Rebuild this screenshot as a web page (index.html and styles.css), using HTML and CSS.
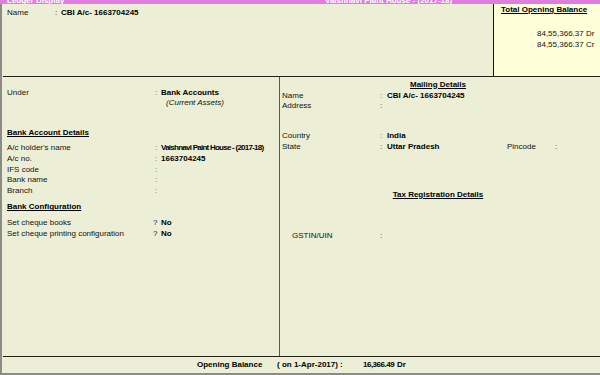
FILE: index.html
```html
<!DOCTYPE html>
<html lang="en">
<head>
  <meta charset="UTF-8" />
  <title>Ledger Display</title>
  <link rel="stylesheet" href="styles.css">
</head>
<body>

  <div class="titlebar">
    <span class="title-left">Ledger Display</span>
    <span class="title-company">Vaishnavi Paint House - (2017-18)</span>
  </div>

  <div class="frame">
    <div class="top">
      <div class="top-main">
        <div class="row">
          <span class="top-label">Name</span>
          <span class="top-sep">:</span>
          <span class="val">CBI A/c- 1663704245</span>
        </div>
      </div>
      <div class="balance-box">
        <div class="heading">Total Opening Balance</div>
        <div class="totals">
          <div>84,55,366.37 Dr</div>
          <div>84,55,366.37 Cr</div>
        </div>
      </div>
    </div>

    <div class="panes">
      <div class="pane left">
        <div class="row first">
          <span class="label">Under</span>
          <span class="sep">:</span>
          <span class="val">Bank Accounts</span>
        </div>
        <div class="row">
          <span class="label"></span>
          <span class="sep"></span>
          <span class="group">(Current Assets)</span>
        </div>

        <div class="heading section-1">Bank Account Details</div>
        <div class="rows-1">
          <div class="row">
            <span class="label">A/c holder's name</span>
            <span class="sep">:</span>
            <span class="val narrow">Vaishnavi Paint House - (2017-18)</span>
          </div>
          <div class="row">
            <span class="label">A/c no.</span>
            <span class="sep">:</span>
            <span class="val">1663704245</span>
          </div>
          <div class="row">
            <span class="label">IFS code</span>
            <span class="sep">:</span>
          </div>
          <div class="row">
            <span class="label">Bank name</span>
            <span class="sep">:</span>
          </div>
          <div class="row">
            <span class="label">Branch</span>
            <span class="sep">:</span>
          </div>
        </div>

        <div class="heading section-2">Bank Configuration</div>
        <div class="rows-2">
          <div class="row">
            <span class="label">Set cheque books</span>
            <span class="ask">?</span>
            <span class="val">No</span>
          </div>
          <div class="row">
            <span class="label">Set cheque printing configuration</span>
            <span class="ask">?</span>
            <span class="val">No</span>
          </div>
        </div>
      </div>

      <div class="pane right">
        <div class="heading center">Mailing Details</div>
        <div class="rows-3">
          <div class="row">
            <span class="label">Name</span>
            <span class="sep">:</span>
            <span class="val">CBI A/c- 1663704245</span>
          </div>
          <div class="row">
            <span class="label">Address</span>
            <span class="sep">:</span>
          </div>
        </div>
        <div class="rows-4">
          <div class="row">
            <span class="label">Country</span>
            <span class="sep">:</span>
            <span class="val">India</span>
          </div>
          <div class="row">
            <span class="label">State</span>
            <span class="sep">:</span>
            <span class="val state">Uttar Pradesh</span>
            <span class="pin-label">Pincode</span>
            <span class="sep">:</span>
          </div>
        </div>

        <div class="heading center section-3">Tax Registration Details</div>
        <div class="row gstin">
          <span class="label">GSTIN/UIN</span>
          <span class="sep">:</span>
        </div>
      </div>
    </div>

    <div class="footer">
      <span class="ob-label">Opening Balance</span>
      <span class="ob-date">( on 1-Apr-2017) :</span>
      <span class="ob-amt">16,366.49</span>
      <span class="ob-side">Dr</span>
    </div>
  </div>

</body>
</html>
```

FILE: styles.css
```css
* {
  box-sizing: border-box;
}

body {
  margin: 0;
  width: 600px;
  height: 375px;
  overflow: hidden;
  background: #ecefd6;
  font-family: 'Liberation Sans', Arial, sans-serif;
  font-size: 8px;
  color: #111;
}

/* window title, mostly cut off at the top */
.titlebar {
  height: 4px;
  background: #e07ee0;
  overflow: hidden;
  display: flex;
  align-items: flex-end;
  color: #fff;
  font-weight: bold;
  line-height: 7px;
}

.title-left {
  margin-left: 7px;
  width: 318px;
}

.frame {
  height: 371px;
  border-left: 2px solid #8c8c86;
  border-bottom: 2px solid #8c8c86;
  padding-left: 1px;
  display: flex;
  flex-direction: column;
}

.row {
  display: flex;
  line-height: 10.75px;
  white-space: nowrap;
}

.val {
  font-weight: bold;
  color: #000;
}

.narrow {
  letter-spacing: -0.75px;
}

.heading {
  font-weight: bold;
  text-decoration: underline;
  line-height: 11px;
  color: #000;
}

/* top strip */
.top {
  height: 73px;
  display: flex;
  border-bottom: 1px solid #22221a;
}

.top-main {
  flex: 1;
  padding: 3.5px 0 0 4px;
}

.top-label {
  width: 48px;
}

.top-sep {
  width: 6px;
}

.balance-box {
  width: 107px;
  background: #ffffd9;
  border-left: 1px solid #111;
  padding: 0 0 0 7px;
}

.totals {
  margin: 12.5px 0 0 36px;
  line-height: 11px;
}

/* two panes */
.panes {
  height: 280px;
  display: flex;
  border-bottom: 1px solid #22221a;
}

.pane.left {
  width: 277px;
  border-right: 1px solid #5a5a50;
  padding-left: 4px;
}

.pane.right {
  flex: 1;
  padding-left: 2px;
}

.left .label {
  width: 146px;
}

.left .sep {
  width: 8px;
  padding-left: 2px;
  color: #666;
}

.ask {
  width: 8px;
}

.first {
  margin-top: 10.5px;
}

.group {
  font-style: italic;
  padding-left: 5px;
}

.section-1 {
  margin-top: 18px;
}

.rows-1 {
  margin-top: 5px;
}

.section-2 {
  margin-top: 4.5px;
}

.rows-2 {
  margin-top: 6px;
}

.right .label {
  width: 98px;
}

.right .sep {
  width: 7px;
  color: #444;
}

.center {
  text-align: center;
  padding-right: 6px;
  margin-top: 1.5px;
}

.rows-3 {
  margin-top: 1px;
}

.rows-4 {
  margin-top: 19px;
}

.state {
  width: 120px;
}

.pin-label {
  width: 48px;
}

.section-3 {
  margin-top: 36px;
}

.gstin {
  margin-top: 31px;
}

.gstin .label {
  width: 88px;
  margin-left: 10px;
}

/* bottom line */
.footer {
  flex: 1;
  display: flex;
  align-items: center;
  padding: 0 0 1px 194px;
  font-weight: bold;
  color: #000;
}

.ob-label {
  width: 80px;
}

.ob-date {
  width: 86px;
}

.ob-amt {
  width: 32px;
  letter-spacing: -0.5px;
}

.ob-side {
  margin-left: 2px;
}
```
